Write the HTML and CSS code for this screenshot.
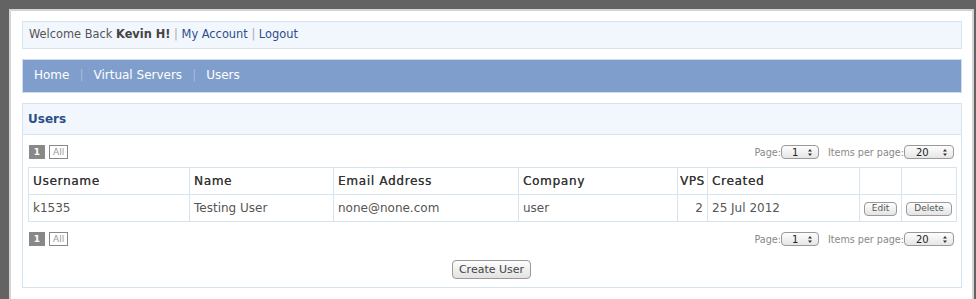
FILE: index.html
```html
<!DOCTYPE html>
<html lang="en">
<head>
  <meta charset="UTF-8" />
  <title>Users</title>
  <link rel="stylesheet" href="styles.css">
</head>
<body>
  <div class="page">
    <!-- Welcome bar -->
    <div class="welcome">
      Welcome Back <b>Kevin H!</b> <span class="sep">|</span> <a href="#">My Account</a> <span class="sep">|</span> <a href="#">Logout</a>
    </div>

    <!-- Main navigation -->
    <nav class="menu">
      <a href="#">Home</a><span class="sep">|</span><a href="#">Virtual Servers</a><span class="sep">|</span><a href="#">Users</a>
    </nav>

    <!-- Users panel -->
    <section class="panel">
      <h2>Users</h2>
      <div class="panel-body">
        <div class="pager">
          <div class="pages">
            <span class="pg current">1</span>
            <span class="pg">All</span>
          </div>
          <div class="per-page">
            <label>Page:</label>
            <span class="select small">1<svg viewBox="0 0 6 9" width="6" height="9"><path d="M1 3.5 L3 1 L5 3.5Z M1 5.5 L3 8 L5 5.5Z" fill="#333"/></svg></span>
            <label class="gap">Items per page:</label>
            <span class="select wide">20<svg viewBox="0 0 6 9" width="6" height="9"><path d="M1 3.5 L3 1 L5 3.5Z M1 5.5 L3 8 L5 5.5Z" fill="#333"/></svg></span>
          </div>
        </div>

        <table class="users">
          <colgroup>
            <col style="width:161px"><col style="width:144px"><col style="width:185px"><col style="width:159px"><col style="width:30px"><col style="width:152px"><col style="width:42px"><col style="width:55px">
          </colgroup>
          <thead>
            <tr>
              <th>Username</th><th>Name</th><th>Email Address</th><th>Company</th><th class="vps">VPS</th><th>Created</th><th></th><th></th>
            </tr>
          </thead>
          <tbody>
            <tr>
              <td>k1535</td><td>Testing User</td><td>none@none.com</td><td>user</td><td class="num">2</td><td>25 Jul 2012</td>
              <td class="act"><button class="btn-sm">Edit</button></td>
              <td class="act"><button class="btn-sm">Delete</button></td>
            </tr>
          </tbody>
        </table>

        <div class="pager bottom">
          <div class="pages">
            <span class="pg current">1</span>
            <span class="pg">All</span>
          </div>
          <div class="per-page">
            <label>Page:</label>
            <span class="select small">1<svg viewBox="0 0 6 9" width="6" height="9"><path d="M1 3.5 L3 1 L5 3.5Z M1 5.5 L3 8 L5 5.5Z" fill="#333"/></svg></span>
            <label class="gap">Items per page:</label>
            <span class="select wide">20<svg viewBox="0 0 6 9" width="6" height="9"><path d="M1 3.5 L3 1 L5 3.5Z M1 5.5 L3 8 L5 5.5Z" fill="#333"/></svg></span>
          </div>
        </div>

        <div class="actions">
          <button class="btn">Create User</button>
        </div>
      </div>
    </section>
  </div>
</body>
</html>
```

FILE: styles.css
```css
body {
  margin: 0;
  background: #636363;
  font-family: "DejaVu Sans", sans-serif;
  font-size: 11px;
  color: #555;
  height: 299px;
  overflow: hidden;
}

.page {
  margin: 9px 2px 0 9px;
  background: #fff;
  border: 2px solid #d4d4d4;
  border-bottom: none;
  padding: 10px 10px 20px 11px;
}

a {
  color: #2d4e88;
  text-decoration: none;
}

.welcome {
  background: #f2f7fe;
  border: 1px solid #d6e4f0;
  height: 26px;
  line-height: 25px;
  padding-left: 6px;
  font-size: 11.4px;
  color: #555;
}

.welcome b {
  color: #444;
  font-weight: 600;
}

.welcome .sep {
  color: #aaa;
}

.menu {
  margin-top: 10px;
  background: #7f9ecc;
  border: 1px solid #cddcf0;
  height: 32px;
  line-height: 31px;
  padding-left: 11px;
  font-size: 12px;
}

.menu a {
  color: #fff;
}

.menu .sep {
  color: #a7bcdc;
  margin: 0 10px;
  font-size: 12px;
}

.panel {
  margin-top: 10px;
  border: 1px solid #d6e4f0;
}

.panel h2 {
  margin: 0;
  background: #f2f7fe;
  border-bottom: 1px solid #d6e4f0;
  height: 30px;
  line-height: 30px;
  padding-left: 5px;
  font-size: 12px;
  color: #2d4e88;
}

.panel-body {
  padding: 10px 6px 8px 5px;
}

.pager {
  display: flex;
  justify-content: space-between;
  align-items: center;
  height: 14px;
  margin-bottom: 8px;
}

.pager.bottom {
  margin-top: 10px;
  margin-bottom: 14px;
}

.pages {
  display: flex;
  gap: 4px;
  padding-left: 1px;
}

.pg {
  box-sizing: border-box;
  height: 14px;
  min-width: 16px;
  padding: 0 3px;
  border: 1px solid #888;
  font-size: 9px;
  line-height: 12px;
  text-align: center;
  color: #999;
}

.pg.current {
  background: #888;
  color: #fff;
  font-weight: bold;
}

.per-page {
  display: flex;
  align-items: center;
  font-size: 9.6px;
  color: #888;
  padding-right: 1px;
}

.per-page .gap {
  margin-left: 9px;
}

.select {
  box-sizing: border-box;
  display: flex;
  align-items: center;
  justify-content: space-between;
  height: 14px;
  border: 1px solid #999;
  border-radius: 4px;
  background: linear-gradient(#fdfdfd, #e6e6e6);
  padding: 0 5px 0 10px;
  font-size: 10px;
  color: #222;
}

.select.small {
  width: 38px;
}

.select.wide {
  width: 50px;
  padding-left: 11px;
}

table.users {
  width: 100%;
  table-layout: fixed;
  border-collapse: collapse;
}

.users th,
.users td {
  border: 1px solid #d6e4f0;
  height: 26px;
  padding: 0 4px;
  text-align: left;
  white-space: nowrap;
}

.users th {
  font-size: 12px;
  font-weight: normal;
  color: #333;
  letter-spacing: 0.7px;
  text-shadow: 0.2px 0 0 #555;
}

.users th.vps {
  padding: 0 2px;
  letter-spacing: 0.5px;
}

.users td {
  font-size: 12px;
  color: #555;
}

.users td.num {
  text-align: right;
}

.users td.act {
  text-align: center;
  padding: 0;
}

.btn-sm {
  font-family: "DejaVu Sans", sans-serif;
  font-size: 9px;
  color: #555;
  height: 14px;
  padding: 0 7px;
  border: 1px solid #999;
  border-radius: 4px;
  background: linear-gradient(#fdfdfd, #e4e4e4);
  line-height: 11px;
}

.actions {
  text-align: center;
}

.btn {
  font-family: "DejaVu Sans", sans-serif;
  font-size: 11px;
  color: #444;
  height: 19px;
  width: 79px;
  padding: 0;
  border: 1px solid #999;
  border-radius: 4px;
  background: linear-gradient(#fdfdfd, #e2e2e2);
}
```
